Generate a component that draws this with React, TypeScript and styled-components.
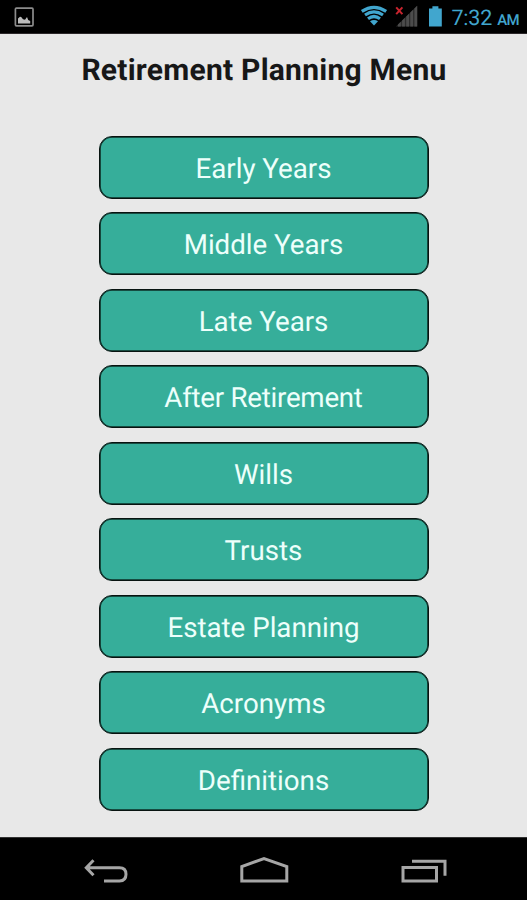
import React from 'react';
import styled, { createGlobalStyle } from 'styled-components';

const GlobalStyle = createGlobalStyle`
  body { margin: 0; background: #000; }
  *, *::before { box-sizing: border-box; }
`;

const Screen = styled.div`
  width: 527px;
  height: 900px;
  display: flex;
  flex-direction: column;
  overflow: hidden;
  background: #000;
  font-family: Roboto, sans-serif;
  text-rendering: geometricPrecision;
`;

const StatusBar = styled.header`
  height: 34px;
  flex: none;
  display: flex;
  justify-content: space-between;
  background: #000;
  border-bottom: 1px solid #2b2729;
`;

const StatusIcons = styled.svg`
  display: block;
  height: 33px;
`;

const StatusRight = styled.div`
  display: flex;
  padding-right: 8px;
  color: #41a6ce;
`;

const Clock = styled.div`
  display: flex;
  align-items: baseline;
  height: 33px;
  margin-left: 6px;
`;

const Time = styled.span`
  font-size: 21.5px;
  line-height: 37px;
  letter-spacing: -0.2px;
`;

const Meridiem = styled.span`
  font-size: 15px;
  font-weight: 500;
  margin-left: 5px;
  letter-spacing: -0.6px;
`;

const Content = styled.main`
  height: 803px;
  flex: none;
  display: flex;
  flex-direction: column;
  align-items: center;
  background: #e8e8e8;
`;

const Title = styled.h1`
  margin: 19px 0 0;
  padding-left: 1px;
  height: 83px;
  font-size: 30px;
  line-height: 36px;
  font-weight: 700;
  letter-spacing: 0.24px;
  color: #171717;
  white-space: nowrap;
`;

const Menu = styled.nav`
  display: flex;
  flex-direction: column;
  gap: 13.45px;
`;

const MenuButton = styled.button<{ $tracking?: string }>`
  width: 330px;
  height: 63px;
  flex: none;
  padding: 3px 0 0;
  border: 1px solid #081310;
  border-radius: 13px;
  box-shadow: inset 0 0 0 0.8px #0d2c25;
  background: #36ae9a;
  color: #edfffb;
  font: 400 27.7px/32px Roboto, sans-serif;
  letter-spacing: ${(p) => p.$tracking ?? 'normal'};
  text-rendering: geometricPrecision;
`;

const NavBar = styled.footer`
  height: 63px;
  flex: none;
  display: flex;
  align-items: center;
  justify-content: space-between;
  padding: 2px 79px 0 82px;
  border-top: 1px solid #333;
  background: #000;
`;

const NavIcon = styled.svg`
  display: block;
  width: 50px;
  height: 30px;
  fill: none;
  stroke: #a6a6a6;
  stroke-width: 3;
`;

const items = [
  { label: 'Early Years' },
  { label: 'Middle Years' },
  { label: 'Late Years' },
  { label: 'After Retirement', tracking: '-0.25px' },
  { label: 'Wills' },
  { label: 'Trusts' },
  { label: 'Estate Planning' },
  { label: 'Acronyms' },
  { label: 'Definitions' },
];

const PictureIcon = () => (
  <StatusIcons width="40" viewBox="0 0 40 33">
    <rect x="15.4" y="8.2" width="17.6" height="17.6" rx="1" fill="none" stroke="#8c8c8c" strokeWidth="1.7" />
    <path d="M18 23.5v-5l2-1.8 1.2 0.2 1.8 2.3 2 0.5 2-2.6 1.2 2.8 2 1v2.6z" fill="#bcbcbc" />
  </StatusIcons>
);

const signalBars = [0, 1, 2, 3, 4];

const PhoneStatus = () => (
  <StatusIcons width="85" viewBox="360 0 85 33">
    <g fill="none" stroke="#41a6ce" strokeWidth="3.2">
      <path d="M361.8 11.3Q374 3.3 386.2 11.3" />
      <path d="M365 15Q374 8.9 383 15" />
      <path d="M368 18.7Q374 14.3 380 18.7" />
    </g>
    <path d="M370 21.2Q374 18.6 378 21.2L374 25.6z" fill="#41a6ce" />
    <path d="M396 26.4L417.2 5.8V26.4z" fill="#2c2c2c" />
    {signalBars.map((i) => (
      <path
        key={i}
        d={`M${398 + i * 4.1} 26.4v${-(2 + i * 4)}l2.8-2.7v${4.7 + i * 4}z`}
        fill="#4c4c4c"
      />
    ))}
    <path d="M396.2 7.3l6.2 6.8M402.4 7.3l-6.2 6.8" stroke="#c9242e" strokeWidth="2" />
    <path d="M429 8.4h3.4V6.2h6v2.2h3.4v18.2H429z" fill="#41a6ce" />
  </StatusIcons>
);

export default function App() {
  return (
    <>
      <GlobalStyle />
      <Screen>
        <StatusBar>
          <PictureIcon />
          <StatusRight>
            <PhoneStatus />
            <Clock>
              <Time>7:32</Time>
              <Meridiem>AM</Meridiem>
            </Clock>
          </StatusRight>
        </StatusBar>
        <Content>
          <Title>Retirement Planning Menu</Title>
          <Menu>
            {items.map((item) => (
              <MenuButton key={item.label} $tracking={item.tracking}>
                {item.label}
              </MenuButton>
            ))}
          </Menu>
        </Content>
        <NavBar>
          <NavIcon viewBox="82 855 50 30">
            <path d="M93.5 860.2l-7.2 7.5 7.2 7.5M86.5 867.7H119.5Q126 867.7 126 874.3T119.5 881H104" />
          </NavIcon>
          <NavIcon viewBox="240 855 50 30">
            <path d="M241.8 881V866.5L264 858.5 286.8 866.5V881z" />
          </NavIcon>
          <NavIcon viewBox="398 855 50 30">
            <path d="M403 867.5h33.5V881H403zM412 861.2h33v14.5" />
          </NavIcon>
        </NavBar>
      </Screen>
    </>
  );
}
